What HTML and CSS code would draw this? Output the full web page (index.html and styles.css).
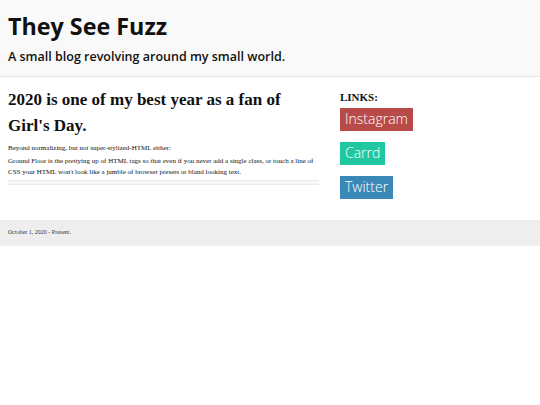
FILE: index.html
```html
<!DOCTYPE html>
<html lang="en">
<head>
  <meta charset="UTF-8" />
  <title>They See Fuzz</title>
  <link rel="stylesheet" href="styles.css">
</head>
<body>
  <!-- 상단 헤더 -->
  <header class="site-header">
    <h1 class="site-title">They See Fuzz</h1>
    <p class="site-tagline">A small blog revolving around my small world.</p>
  </header>

  <!-- 본문 + 링크 -->
  <main class="content">
    <article class="post">
      <h2>2020 is one of my best year as a fan of Girl's Day.</h2>
      <p>Beyond normalizing, but not super-stylized-HTML either:</p>
      <p>Ground Floor is the prettying up of HTML tags so that even if you never add a single class, or touch a line of CSS your HTML won't look like a jumble of browser presets or bland looking text.</p>
      <hr />
    </article>

    <aside class="links">
      <h3>LINKS:</h3>
      <a class="link-btn instagram" href="#">Instagram</a>
      <a class="link-btn carrd" href="#">Carrd</a>
      <a class="link-btn twitter" href="#">Twitter</a>
    </aside>
  </main>

  <footer class="site-footer">October 1, 2020 - Present.</footer>
</body>
</html>
```

FILE: styles.css
```css
body {
  margin: 0;
  background-color: #fff;
  color: #111;
  font-family: 'Liberation Serif', 'Times New Roman', serif;
}

/* 헤더 */
.site-header {
  background-color: #f9f9f9;
  border-bottom: 1px solid #e6e6e6;
  padding: 10px 8px 11px;
  font-family: 'Open Sans', sans-serif;
}

.site-title {
  margin: 0;
  font-size: 23.3px;
  font-weight: 700;
  line-height: 32px;
}

.site-tagline {
  margin: 6px 0 0;
  font-size: 12.5px;
  font-weight: 600;
  line-height: 17px;
}

/* 본문 영역 */
.content {
  display: flex;
  align-items: flex-start;
  padding: 10px 8px 21px;
}

.post {
  width: 311px;
  margin-right: 21px;
}

.post h2 {
  margin: 0 0 4px;
  font-size: 17px;
  font-weight: 700;
  line-height: 26px;
}

.post p {
  margin: 0 0 2px;
  font-size: 7px;
  line-height: 11px;
}

.post hr {
  margin: 1px 0 0;
  height: 3px;
  border: none;
  border-top: 1px solid #eaeaea;
  border-bottom: 1px solid #eaeaea;
  background-color: #f7f7f7;
}

/* 링크 버튼 */
.links {
  display: flex;
  flex-direction: column;
  align-items: flex-start;
}

.links h3 {
  margin: 4px 0 4px;
  font-size: 11px;
  font-weight: 700;
  line-height: 13px;
}

.link-btn {
  display: block;
  padding: 2px 5px 3px;
  margin-bottom: 11px;
  font-family: 'Open Sans', sans-serif;
  font-size: 14px;
  font-weight: 300;
  line-height: 18px;
  color: #fff;
  text-decoration: none;
}

.link-btn:last-child {
  margin-bottom: 0;
}

.instagram { background-color: #b94a4a; }
.carrd { background-color: #1fc8a0; }
.twitter { background-color: #3a88b8; }

/* 푸터 */
.site-footer {
  background-color: #eee;
  padding: 7px 8px 8px;
  font-size: 6px;
  line-height: 11px;
  color: #333;
}
```
